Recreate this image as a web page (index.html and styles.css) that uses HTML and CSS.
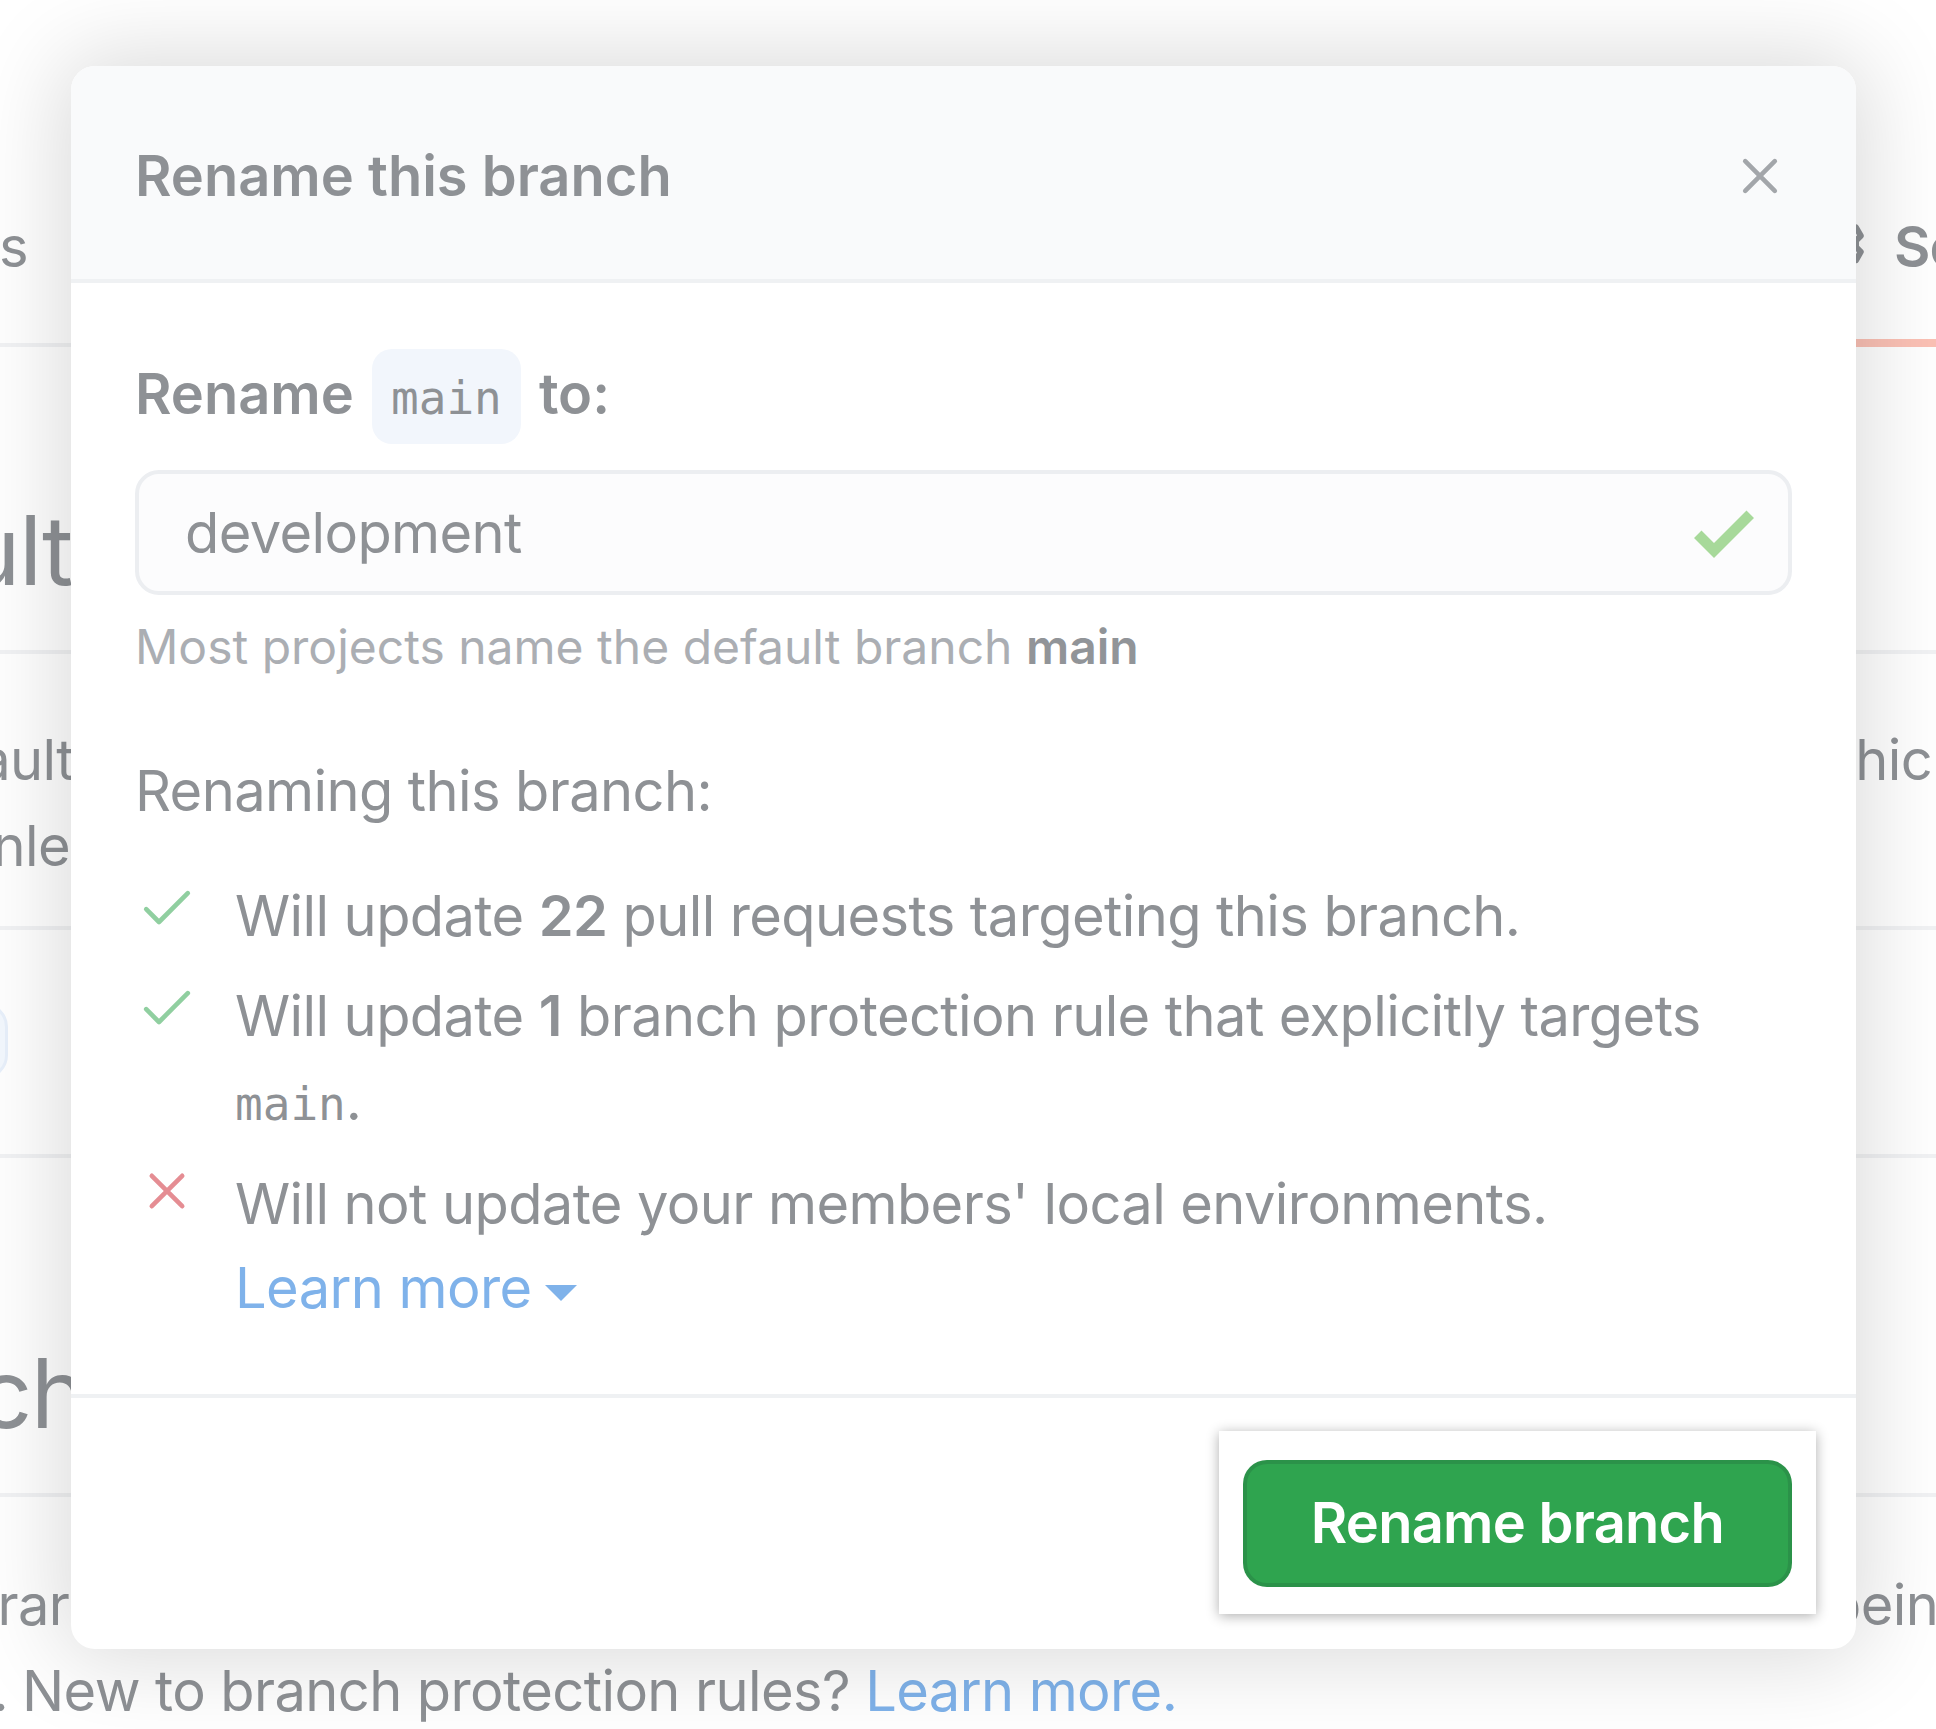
FILE: index.html
```html
<!DOCTYPE html>
<html lang="en">
<head>
<meta charset="utf-8">
<title>Rename this branch</title>
<link rel="stylesheet" href="styles.css">
</head>
<body>
<div class="page">
  <nav class="tabs">
    <div class="tail w-insights"><span class="tab">Insights</span></div>
    <div class="tab tab-sel">
      <svg class="gear" viewBox="0 0 16 16" width="64" height="64" aria-hidden="true"><g fill="none" stroke="#8e9195" stroke-width="1.5" stroke-linejoin="round"><circle cx="8" cy="8" r="2.25"/><path d="M6.8 1.2h2.4l.4 1.7 1.3.7 1.6-.5 1.2 2.1-1.2 1.2v1.6l1.2 1.2-1.2 2.1-1.6-.5-1.3.7-.4 1.7H6.8l-.4-1.7-1.3-.7-1.6.5-1.2-2.1 1.2-1.2V7.2L2.3 6l1.2-2.1 1.6.5 1.3-.7z"/></g></svg>
      <span>Settings</span>
    </div>
  </nav>

  <section class="bg-row row-heading">
    <div class="tail w-default"><h2 class="sub-heading">Default</h2></div>
  </section>

  <section class="bg-row row-para">
    <p class="line"><span class="tail w-ault">default</span><span class="frag-right w-which">which</span></p>
    <p class="line"><span class="tail w-nless">unless</span></p>
  </section>

  <section class="bg-row row-ghost">
    <div class="tail w-ghost"><span class="ghost-btn"></span></div>
  </section>

  <section class="bg-row row-heading2">
    <div class="tail w-branch"><h2 class="sub-heading">Branch</h2></div>
  </section>

  <section class="row-para2">
    <p class="line"><span class="tail w-rar">library</span><span class="frag-right w-being">being</span></p>
    <p class="line line-start"><span class="tail w-dot">merging.</span><span class="rest">New to branch protection rules? <a class="link" href="#">Learn more.</a></span></p>
  </section>
</div>

<div class="modal" role="dialog" aria-label="Rename this branch">
  <header class="modal-header">
    <h3 class="modal-title">Rename this branch</h3>
    <button class="close" type="button" aria-label="Close">
      <svg viewBox="0 0 16 16" width="64" height="64" aria-hidden="true"><path d="M4.3 4.3l7.4 7.4M11.7 4.3l-7.4 7.4" fill="none" stroke="#a3a6aa" stroke-width="1.15" stroke-linecap="round"/></svg>
    </button>
  </header>

  <div class="modal-body">
    <label class="rename-label" for="new-name">Rename <code class="code-pill">main</code> to:</label>
    <div class="input-wrap">
      <input class="input" id="new-name" type="text" value="development">
      <svg class="input-check" viewBox="0 0 12 16" width="60" height="80" aria-hidden="true"><path d="M12 5l-8 8-4-4 1.5-1.5L4 10l6.5-6.5L12 5z" fill="#a7d99a"/></svg>
    </div>
    <p class="note">Most projects name the default branch <strong>main</strong></p>

    <p class="renaming">Renaming this branch:</p>
    <ul class="effects">
      <li>
        <svg class="fx-icon" viewBox="0 0 16 16" width="64" height="64" aria-hidden="true"><path d="M2.8 8.8L6 12l7.2-7.2" fill="none" stroke="#90cfa0" stroke-width="1.15" stroke-linecap="round" stroke-linejoin="round"/></svg>
        <span class="fx-text">Will update <strong>22</strong> pull requests targeting this branch.</span>
      </li>
      <li>
        <svg class="fx-icon" viewBox="0 0 16 16" width="64" height="64" aria-hidden="true"><path d="M2.8 8.8L6 12l7.2-7.2" fill="none" stroke="#90cfa0" stroke-width="1.15" stroke-linecap="round" stroke-linejoin="round"/></svg>
        <span class="fx-text">Will update <strong>1</strong> branch protection rule that explicitly targets <code class="code-inline">main</code>.</span>
      </li>
      <li>
        <svg class="fx-icon fx-x" viewBox="0 0 16 16" width="64" height="64" aria-hidden="true"><path d="M4.2 4.2l7.6 7.6M11.8 4.2l-7.6 7.6" fill="none" stroke="#e58d93" stroke-width="1.15" stroke-linecap="round"/></svg>
        <div class="fx-text">
          Will not update your members' local environments.
          <details class="learn">
            <summary>Learn more<span class="caret"></span></summary>
          </details>
        </div>
      </li>
    </ul>
  </div>

  <footer class="modal-footer">
    <div class="spotlight">
      <button class="btn-primary" type="button">Rename branch</button>
    </div>
  </footer>
</div>
</body>
</html>
```

FILE: styles.css
```css
* { box-sizing: border-box; }

html, body { margin: 0; padding: 0; }

body {
  width: 1936px;
  height: 1729px;
  overflow: hidden;
  position: relative;
  background: #ffffff;
  color: #8e9195;
  font-family: Inter, "Noto Sans", "Liberation Sans", sans-serif;
  font-size: 56px;
  line-height: 84px;
  letter-spacing: -0.6px;
}

/* ---------- background page ---------- */
.page { width: 1936px; }

.tail {
  display: flex;
  justify-content: flex-end;
  white-space: nowrap;
  flex: none;
}

.tabs {
  display: flex;
  justify-content: space-between;
  align-items: flex-end;
  padding-top: 205px;
  box-shadow: inset 0 -4px 0 #f1f2f4;
}
.tab {
  display: block;
  padding-bottom: 50px;
  border-bottom: 8px solid transparent;
  white-space: nowrap;
}
.w-insights { width: 28px; align-items: flex-end; }
.tab-sel {
  display: flex;
  align-items: center;
  width: 130px;
  overflow: hidden;
  font-weight: 600;
  letter-spacing: -1px;
  border-bottom-color: #fbc1b5;
}
.gear { flex: none; margin-right: 24px; }

.bg-row { border-bottom: 4px solid #f1f2f4; }

.row-heading { padding: 131px 0 28px; }
.row-heading2 { padding: 163px 0 28px; }
.sub-heading {
  margin: 0;
  font-size: 96px;
  line-height: 144px;
  font-weight: 400;
  letter-spacing: -1.5px;
}
.w-default { width: 72px; }
.w-branch { width: 86px; }

.row-para { padding: 63px 0 37px; }
.row-para2 { padding-top: 65px; }
.line {
  display: flex;
  justify-content: space-between;
  margin: 0;
  height: 86px;
  line-height: 86px;
  white-space: nowrap;
}
.line-start { justify-content: flex-start; }
.frag-right { overflow: hidden; white-space: nowrap; flex: none; }
.w-ault { width: 74px; }
.w-nless { width: 128px; }
.w-which { width: 126px; }
.w-rar { width: 101px; }
.w-being { width: 109px; }
.w-dot { width: 8px; }
.rest { margin-left: 14px; }
.link { color: #7fb2ea; text-decoration: none; }

.row-ghost { padding: 73px 0 75px; }
.w-ghost { width: 8px; height: 76px; }
.ghost-btn {
  display: block;
  flex: none;
  width: 220px;
  height: 76px;
  background: #f3f8fe;
  border: 3px solid #e8f0fb;
  border-radius: 24px;
}

/* ---------- dialog ---------- */
.modal {
  position: absolute;
  left: 71px;
  top: 66px;
  width: 1785px;
  background: #ffffff;
  border-radius: 24px;
  overflow: hidden;
  box-shadow: 0 0 90px 10px rgba(0, 0, 0, 0.15);
}

.modal-header {
  display: flex;
  align-items: center;
  justify-content: space-between;
  padding: 68px 64px 61px;
  background: #f9fafb;
  border-bottom: 4px solid #eff1f3;
}
.modal-title {
  margin: 0;
  font-size: 56px;
  line-height: 84px;
  font-weight: 600;
  letter-spacing: 0;
  color: #8e9195;
}
.close {
  display: block;
  width: 64px;
  height: 64px;
  padding: 0;
  border: 0;
  background: none;
}
.close svg { display: block; }

.modal-body { padding: 66px 64px 64px; }

.rename-label {
  display: block;
  margin-bottom: 26px;
  font-weight: 600;
  letter-spacing: 0;
}
.code-pill {
  display: inline-block;
  margin: 0 4px;
  padding: 12px 19px 8px;
  font-family: "DejaVu Sans Mono", "Liberation Mono", monospace;
  font-size: 46px;
  line-height: 75px;
  font-weight: 400;
  letter-spacing: 0;
  color: #8e9195;
  background: #f2f6fc;
  border-radius: 20px;
}

.input-wrap {
  display: flex;
  align-items: center;
  height: 125px;
  padding: 0 34px 0 46px;
  background: #fcfcfd;
  border: 4px solid #eceef1;
  border-radius: 24px;
}
.input {
  flex: 1;
  min-width: 0;
  padding: 0;
  border: 0;
  outline: none;
  background: transparent;
  font-family: inherit;
  font-size: 56px;
  letter-spacing: -0.6px;
  color: #8e9195;
}
.input-check { flex: none; display: block; }

.note {
  margin: 16px 0 0;
  font-size: 48px;
  line-height: 72px;
  letter-spacing: 0;
  color: #abaeb3;
}
.note strong { font-weight: 600; color: #919498; }

.renaming { margin: 66px 0 0; }

.effects {
  margin: 41px 0 0;
  padding: 0;
  list-style: none;
}
.effects li {
  display: flex;
  align-items: flex-start;
  margin-bottom: 16px;
}
.effects li:last-child { margin-bottom: 0; }
.fx-icon { flex: none; display: block; margin-right: 36px; }
.fx-x { margin-top: -3px; }
.fx-text { flex: 1; min-width: 0; }
.fx-text strong { font-weight: 600; }
.code-inline {
  font-family: "DejaVu Sans Mono", "Liberation Mono", monospace;
  font-size: 46px;
  letter-spacing: 0;
}

.learn summary {
  list-style: none;
  color: #7fb2ea;
  cursor: pointer;
}
.learn summary::-webkit-details-marker { display: none; }
.caret {
  display: inline-block;
  width: 0;
  height: 0;
  margin-left: 13px;
  vertical-align: middle;
  border-top: 16px solid #7fb2ea;
  border-left: 16px solid transparent;
  border-right: 16px solid transparent;
}

.modal-footer {
  display: flex;
  justify-content: flex-end;
  padding: 62px 64px;
  border-top: 4px solid #eff1f3;
}
.spotlight {
  margin: -29px -24px -27px;
  padding: 29px 24px 27px;
  background: #ffffff;
  box-shadow: 0 2px 12px rgba(0, 0, 0, 0.32);
}
.btn-primary {
  display: block;
  padding: 0 64px;
  font-family: inherit;
  font-size: 56px;
  line-height: 119px;
  font-weight: 600;
  letter-spacing: -0.75px;
  color: #ffffff;
  background: #2fa44f;
  border: 4px solid rgba(27, 31, 35, 0.13);
  border-radius: 24px;
}
```
